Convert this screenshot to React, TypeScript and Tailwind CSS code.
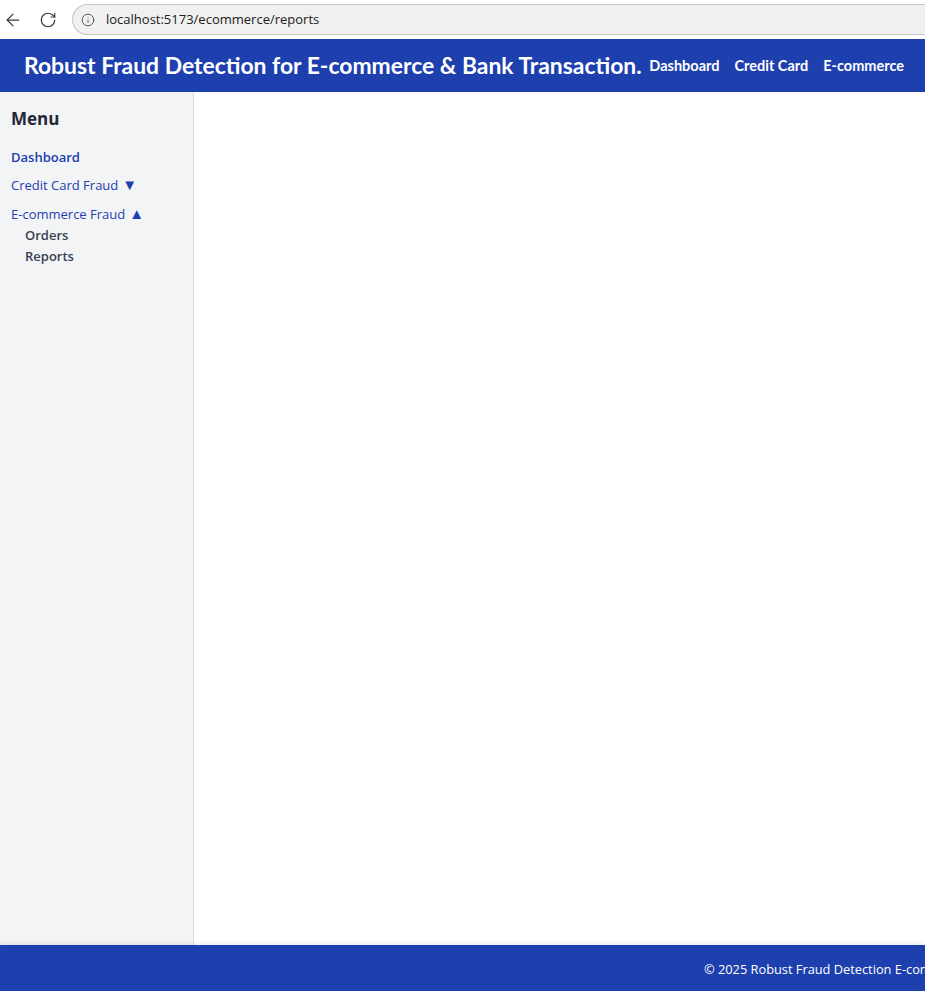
import { ArrowLeft, RotateCw, Info } from "lucide-react";

const font = { fontFamily: '"Open Sans", "Noto Sans", sans-serif' };
const titleFont = { fontFamily: 'Lato, "Open Sans", sans-serif' };

export default function App() {
  return (
    <div className="h-screen flex flex-col overflow-hidden bg-white" style={font}>
      {/* browser bar */}
      <div className="h-[39px] flex items-center bg-white shrink-0">
        <ArrowLeft className="ml-[3px] w-[20px] h-[20px] text-[#3c3c3c]" strokeWidth={1.5} />
        <RotateCw className="ml-[16px] w-[18px] h-[18px] text-[#3c3c3c]" strokeWidth={1.6} />
        <div className="ml-[15px] flex-1 h-[31px] rounded-l-full border border-r-0 border-[#c4c4c4] bg-[#f0f0f0] flex items-center">
          <Info className="ml-[8px] w-[14px] h-[14px] text-[#505050]" strokeWidth={1.6} />
          <span className="ml-[11px] text-[13px] text-[#202020]">localhost:5173/ecommerce/reports</span>
        </div>
      </div>

      {/* header */}
      <header className="h-[53px] bg-[#1e40af] text-white flex items-center justify-between pl-6 pr-[21px] shrink-0 whitespace-nowrap">
        <h1 className="text-[22.9px] font-bold" style={titleFont}>
          Robust Fraud Detection for E-commerce &amp; Bank Transaction.
        </h1>
        <nav className="flex gap-[15px] text-[14.5px] font-bold" style={titleFont}>
          <span>Dashboard</span>
          <span>Credit Card</span>
          <span>E-commerce</span>
        </nav>
      </header>

      <div className="flex flex-1 min-h-0">
        {/* sidebar */}
        <aside className="w-[194px] bg-[#f3f4f6] border-r border-[#d9dade] px-[11px] pt-[14px] shrink-0">
          <h2 className="text-[17px] font-bold text-[#1f2937]">Menu</h2>
          <ul className="mt-[12px] text-[13px]">
            <li className="font-semibold text-[#1e40af] h-[28px] flex items-center">Dashboard</li>
            <li className="text-[#1e40af] h-[29px] flex items-center">
              Credit Card Fraud <span className="ml-[4px] -mt-[3px] text-[15px] leading-none">▼</span>
            </li>
            <li className="text-[#1e40af] h-[28px] flex items-center">
              E-commerce Fraud <span className="ml-[4px] -mt-[3px] text-[15px] leading-none">▲</span>
            </li>
            <li>
              <ul className="pl-[14px] font-semibold text-[#374151]">
                <li className="h-[21px] flex items-center -mt-[3px]">Orders</li>
                <li className="h-[21px] flex items-center">Reports</li>
              </ul>
            </li>
          </ul>
        </aside>
        <main className="flex-1" />
      </div>

      {/* footer */}
      <footer className="h-[46px] bg-[#1e40af] text-white flex items-center pt-[3px] shrink-0 overflow-hidden shadow-[0_-2px_4px_rgba(0,0,0,0.08)]">
        <p className="pl-[704px] whitespace-nowrap text-[12.8px]">
          © 2025 Robust Fraud Detection E-commerce &amp; Bank Transaction. All rights reserved.
        </p>
      </footer>
    </div>
  );
}
